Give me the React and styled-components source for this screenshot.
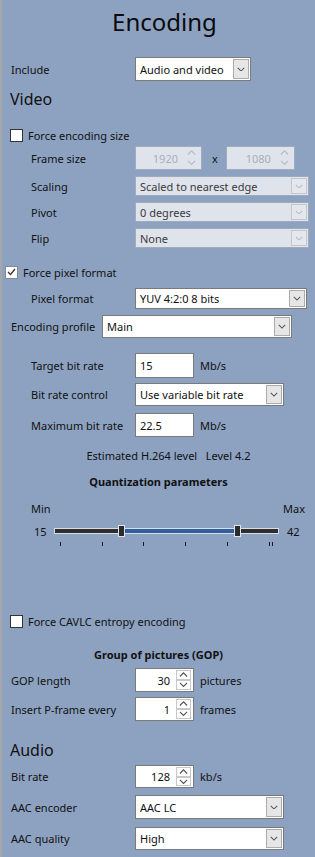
import React from 'react';
import styled, { createGlobalStyle } from 'styled-components';

const FONT = '"Segoe UI", "Noto Sans", "Open Sans", sans-serif';

const GlobalStyle = createGlobalStyle`
  html, body { margin: 0; padding: 0; background: #8da2c1; }
  body { font-family: ${FONT}; font-size: 11px; color: #111; }
`;

const Panel = styled.div`
  width: 315px;
  height: 857px;
  box-sizing: border-box;
  background: #8da2c1;
  border-left: 2px solid #a3a6ab;
  display: flex;
  flex-direction: column;
  overflow: hidden;
`;

const Title = styled.div`
  height: 44px;
  line-height: 44px;
  text-align: center;
  font-size: 24px;
  color: #0a0a0a;
  padding-left: 12px;
`;

const Row = styled.div`
  display: flex;
  align-items: center;
  height: ${({ h }) => h || 20}px;
  margin-top: ${({ mt }) => mt || 0}px;
  padding-left: ${({ indent }) => indent}px;
  flex: 0 0 auto;
`;

const Label = styled.div`
  flex: 0 0 ${({ w }) => w}px;
  white-space: nowrap;
  color: #111;
`;

const Heading = styled.div`
  font-size: 16px;
  padding-left: 8px;
  height: 22px;
  line-height: 22px;
  margin-top: ${({ mt }) => mt}px;
  color: #111;
`;

const Centered = styled.div`
  text-align: center;
  height: 20px;
  line-height: 20px;
  margin-top: ${({ mt }) => mt}px;
  font-weight: ${({ bold }) => (bold ? 700 : 400)};
  padding-left: ${({ shift }) => shift || 0}px;
  color: #111;
`;

const Box = styled.div`
  box-sizing: border-box;
  width: ${({ w }) => w}px;
  height: 100%;
  border: 1px solid ${({ disabled }) => (disabled ? '#a1abbb' : '#7a7a7a')};
  background: ${({ disabled }) => (disabled ? '#dfe4ec' : '#ffffff')};
  color: ${({ disabled, dim }) => (dim ? '#a8afbb' : disabled ? '#3a3a3a' : '#111')};
  display: flex;
  align-items: center;
  position: relative;
`;

const BoxText = styled.span`
  flex: 1;
  padding: 0 ${({ right }) => (right ? 6 : 4)}px 0 ${({ right }) => (right ? 0 : 4)}px;
  text-align: ${({ right }) => (right ? 'right' : 'left')};
  white-space: nowrap;
  overflow: hidden;
`;

const ArrowBtn = styled.div`
  box-sizing: border-box;
  width: 16px;
  align-self: stretch;
  margin: 1px;
  border: 1px solid ${({ disabled }) => (disabled ? '#c3c8d0' : '#acacac')};
  background: ${({ disabled }) => (disabled ? '#e4e7ec' : '#e6e6e6')};
  display: flex;
  align-items: center;
  justify-content: center;
`;

const SpinCol = styled.div`
  width: 15px;
  align-self: stretch;
  display: flex;
  flex-direction: column;
  margin: 1px 2px 1px 0;
`;

const SpinHalf = styled.div`
  flex: 1;
  box-sizing: border-box;
  border: 1px solid ${({ dim }) => (dim ? 'transparent' : '#c8c8c8')};
  display: flex;
  align-items: center;
  justify-content: center;
`;

const Unit = styled.span`
  margin-left: ${({ ml }) => ml || 6}px;
  color: #111;
`;

const Gap = styled.div`
  width: ${({ w }) => w}px;
  flex: 0 0 auto;
`;

const CheckBox = styled.div`
  box-sizing: border-box;
  width: 13px;
  height: 13px;
  border: 1px solid ${({ checked }) => (checked ? '#8a8a8a' : '#333')};
  background: #fff;
  margin-right: 5px;
  display: flex;
  align-items: center;
  justify-content: center;
`;

const SliderWrap = styled.div`
  display: flex;
  align-items: center;
  height: 20px;
  margin-top: 3px;
  padding-left: 32px;
`;

const SliderValue = styled.span`
  width: ${({ w }) => w}px;
  padding-left: ${({ pl }) => pl || 0}px;
  color: #111;
`;

const Track = styled.div`
  position: relative;
  width: 223px;
  height: 4px;
  background: #2e2e2e;
  box-shadow: 0 0 0 1px #d8dde6;
`;

const Range = styled.div`
  position: absolute;
  top: 0;
  bottom: 0;
  background: #2f5fa0;
`;

const Thumb = styled.div`
  position: absolute;
  top: -4px;
  width: 5px;
  height: 10px;
  margin-left: -3px;
  background: #2b2b2b;
  border: 1px solid #dfe3ea;
`;

const Ticks = styled.div`
  position: relative;
  height: 5px;
  margin-top: 1px;
  margin-left: 53px;
  width: 230px;
`;

const Tick = styled.div`
  position: absolute;
  top: 0;
  width: 1px;
  height: 4px;
  background: #1a1a1a;
`;

const Spacer = styled.div`
  height: ${({ h }) => h}px;
  flex: 0 0 auto;
`;

function Chevron({ up, color = '#555', size = 8 }) {
  return (
    <svg width={size} height={size * 0.6} viewBox="0 0 10 6">
      <polyline
        points={up ? '1,5 5,1 9,5' : '1,1 5,5 9,1'}
        fill="none"
        stroke={color}
        strokeWidth="1.3"
      />
    </svg>
  );
}

function Select({ w, value, disabled }) {
  return (
    <Box w={w} disabled={disabled}>
      <BoxText>{value}</BoxText>
      <ArrowBtn disabled={disabled}>
        <Chevron color={disabled ? '#b8bcc4' : '#555'} size={8} />
      </ArrowBtn>
    </Box>
  );
}

function Spinner({ w, value, dim }) {
  return (
    <Box w={w} disabled={dim} dim={dim}>
      <BoxText right>{value}</BoxText>
      <SpinCol>
        <SpinHalf dim={dim}>
          <Chevron up color={dim ? '#b5bcc8' : '#555'} size={9} />
        </SpinHalf>
        <SpinHalf dim={dim}>
          <Chevron color={dim ? '#b5bcc8' : '#555'} size={9} />
        </SpinHalf>
      </SpinCol>
    </Box>
  );
}

function Check({ checked, label, indent, mt }) {
  return (
    <Row indent={indent} mt={mt} h={20}>
      <CheckBox checked={checked}>
        {checked && (
          <svg width="9" height="8" viewBox="0 0 9 8">
            <polyline points="1,4 3.5,6.5 8,1" fill="none" stroke="#333" strokeWidth="1.3" />
          </svg>
        )}
      </CheckBox>
      <span>{label}</span>
    </Row>
  );
}

const ticks = [60, 102, 143, 185, 227, 269, 272];

export default function App() {
  const min = 15;
  const max = 42;
  const qMin = 23;
  const qMax = 37;
  const pct = (v) => ((v - min) / (max - min)) * 100;

  return (
    <>
      <GlobalStyle />
      <Panel>
        <Title>Encoding</Title>

        <Row indent={9} mt={13} h={24}>
          <Label w={124}>Include</Label>
          <Select w={116} value="Audio and video" />
        </Row>

        <Heading mt={7}>Video</Heading>

        <Check indent={8} mt={15} label="Force encoding size" />

        <Row indent={29} mt={1} h={24}>
          <Label w={104}>Frame size</Label>
          <Spinner w={67} value="1920" dim />
          <Unit ml={10}>x</Unit>
          <Gap w={8} />
          <Spinner w={69} value="1080" dim />
        </Row>
        <Row indent={29} mt={6}>
          <Label w={104}>Scaling</Label>
          <Select w={174} value="Scaled to nearest edge" disabled />
        </Row>
        <Row indent={29} mt={6}>
          <Label w={104}>Pivot</Label>
          <Select w={174} value="0 degrees" disabled />
        </Row>
        <Row indent={29} mt={6}>
          <Label w={104}>Flip</Label>
          <Select w={174} value="None" disabled />
        </Row>

        <Check indent={3} mt={14} checked label="Force pixel format" />

        <Row indent={29} mt={6} h={21}>
          <Label w={104}>Pixel format</Label>
          <Select w={172} value="YUV 4:2:0 8 bits" />
        </Row>

        <Row indent={9} mt={6} h={23}>
          <Label w={91}>Encoding profile</Label>
          <Select w={190} value="Main" />
        </Row>

        <Row indent={29} mt={15} h={25}>
          <Label w={104}>Target bit rate</Label>
          <Box w={59}>
            <BoxText>15</BoxText>
          </Box>
          <Unit>Mb/s</Unit>
        </Row>
        <Row indent={29} mt={5} h={23}>
          <Label w={104}>Bit rate control</Label>
          <Select w={149} value="Use variable bit rate" />
        </Row>
        <Row indent={29} mt={7} h={24}>
          <Label w={104}>Maximum bit rate</Label>
          <Box w={59}>
            <BoxText>22.5</BoxText>
          </Box>
          <Unit>Mb/s</Unit>
        </Row>

        <Centered mt={9} shift={20}>
          Estimated H.264 level&nbsp;&nbsp;&nbsp;Level 4.2
        </Centered>
        <Centered mt={6} bold>
          Quantization parameters
        </Centered>

        <Row indent={29} mt={6}>
          <Label w={252}>Min</Label>
          <span>Max</span>
        </Row>

        <SliderWrap>
          <SliderValue w={21}>{min}</SliderValue>
          <Track>
            <Range style={{ left: `${pct(qMin)}%`, right: `${100 - pct(qMax)}%` }} />
            <Thumb style={{ left: `${pct(qMin)}%` }} />
            <Thumb style={{ left: `${pct(qMax)}%` }} />
          </Track>
          <SliderValue w={20} pl={9}>
            {max}
          </SliderValue>
        </SliderWrap>
        <Ticks>
          {ticks.map((x, i) => (
            <Tick key={i} style={{ left: x - 55 }} />
          ))}
        </Ticks>

        <Spacer h={64} />
        <Check indent={8} mt={0} label="Force CAVLC entropy encoding" />

        <Centered mt={14} bold>
          Group of pictures (GOP)
        </Centered>

        <Row indent={9} mt={3} h={24}>
          <Label w={124}>GOP length</Label>
          <Spinner w={59} value="30" />
          <Unit>pictures</Unit>
        </Row>
        <Row indent={9} mt={5} h={24}>
          <Label w={124}>Insert P-frame every</Label>
          <Spinner w={59} value="1" />
          <Unit>frames</Unit>
        </Row>

        <Heading mt={18}>Audio</Heading>

        <Row indent={9} mt={4} h={23}>
          <Label w={124}>Bit rate</Label>
          <Spinner w={59} value="128" />
          <Unit>kb/s</Unit>
        </Row>
        <Row indent={9} mt={7} h={24}>
          <Label w={124}>AAC encoder</Label>
          <Select w={149} value="AAC LC" />
        </Row>
        <Row indent={9} mt={8} h={23}>
          <Label w={124}>AAC quality</Label>
          <Select w={149} value="High" />
        </Row>
      </Panel>
    </>
  );
}
